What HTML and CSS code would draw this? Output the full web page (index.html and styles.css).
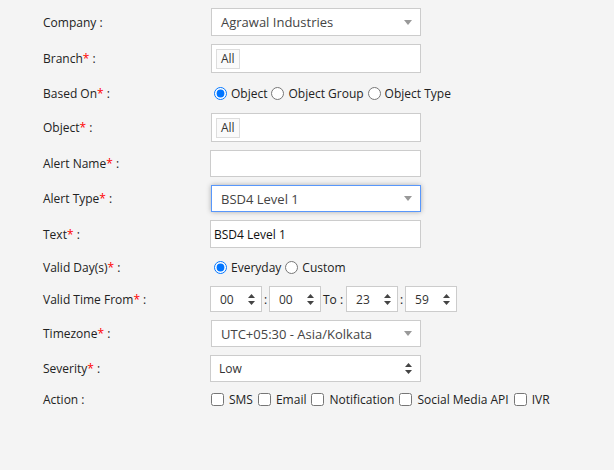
FILE: index.html
```html
<!DOCTYPE html>
<html lang="en">
<head>
  <meta charset="UTF-8">
  <meta name="viewport" content="width=device-width, initial-scale=1.0">
  <title>Alert Settings</title>
  <link rel="stylesheet" href="styles.css">
</head>
<body>
  <div class="form">
    <label class="lbl">Company :</label>
    <div class="chosen first">
      <span>Agrawal Industries</span>
      <svg class="caret" width="8" height="5" viewBox="0 0 8 5"><path d="M0 0h8L4 5z"/></svg>
    </div>

    <label class="lbl">Branch<em>*</em> :</label>
    <div class="tags"><span class="tag">All</span></div>

    <label class="lbl">Based On<em>*</em> :</label>
    <div class="choices">
      <input type="radio" name="based" checked><span>Object</span>
      <input type="radio" name="based"><span>Object Group</span>
      <input type="radio" name="based"><span>Object Type</span>
    </div>

    <label class="lbl">Object<em>*</em> :</label>
    <div class="tags"><span class="tag">All</span></div>

    <label class="lbl">Alert Name<em>*</em> :</label>
    <input class="text" type="text">

    <label class="lbl">Alert Type<em>*</em> :</label>
    <div class="chosen active">
      <span>BSD4 Level 1</span>
      <svg class="caret" width="8" height="5" viewBox="0 0 8 5"><path d="M0 0h8L4 5z"/></svg>
    </div>

    <label class="lbl">Text<em>*</em> :</label>
    <input class="text tall" type="text" value="BSD4 Level 1">

    <label class="lbl">Valid Day(s)<em>*</em> :</label>
    <div class="choices short">
      <input type="radio" name="days" checked><span>Everyday</span>
      <input type="radio" name="days"><span>Custom</span>
    </div>

    <label class="lbl">Valid Time From<em>*</em> :</label>
    <div class="times">
      <div class="spin"><span>00</span><svg class="updown" width="7" height="11" viewBox="0 0 7 11"><path d="M3.5 0L7 4H0zM0 7h7l-3.5 4z"/></svg></div>
      <span class="sep">:</span>
      <div class="spin"><span>00</span><svg class="updown" width="7" height="11" viewBox="0 0 7 11"><path d="M3.5 0L7 4H0zM0 7h7l-3.5 4z"/></svg></div>
      <span class="to">To :</span>
      <div class="spin"><span>23</span><svg class="updown" width="7" height="11" viewBox="0 0 7 11"><path d="M3.5 0L7 4H0zM0 7h7l-3.5 4z"/></svg></div>
      <span class="sep">:</span>
      <div class="spin"><span>59</span><svg class="updown" width="7" height="11" viewBox="0 0 7 11"><path d="M3.5 0L7 4H0zM0 7h7l-3.5 4z"/></svg></div>
    </div>

    <label class="lbl">Timezone<em>*</em> :</label>
    <div class="chosen">
      <span>UTC+05:30 - Asia/Kolkata</span>
      <svg class="caret" width="8" height="5" viewBox="0 0 8 5"><path d="M0 0h8L4 5z"/></svg>
    </div>

    <label class="lbl">Severity<em>*</em> :</label>
    <div class="native">
      <span>Low</span>
      <svg class="updown" width="7" height="11" viewBox="0 0 7 11"><path d="M3.5 0L7 4H0zM0 7h7l-3.5 4z"/></svg>
    </div>

    <label class="lbl">Action :</label>
    <div class="checks">
      <input type="checkbox"><span>SMS</span>
      <input type="checkbox"><span>Email</span>
      <input type="checkbox"><span>Notification</span>
      <input type="checkbox"><span>Social Media API</span>
      <input type="checkbox"><span>IVR</span>
    </div>
  </div>
</body>
</html>
```

FILE: styles.css
```css
* { box-sizing: border-box; }

body {
  margin: 0;
  background: #f4f4f4;
  font-family: "Open Sans", Arial, sans-serif;
  font-size: 12px;
  color: #222;
}

/* Form grid */
.form {
  display: grid;
  grid-template-columns: 167px 1fr;
  row-gap: 8px;
  align-items: center;
  justify-items: start;
  padding: 8px 0 0 43px;
  white-space: nowrap;
}

.lbl em {
  font-style: normal;
  color: #f00;
}

/* Chosen-style select */
.chosen {
  height: 27px;
  margin-left: 1px;
  width: 210px;
  display: flex;
  align-items: center;
  justify-content: space-between;
  padding: 0 8px 0 9px;
  background: #fff;
  border: 1px solid #ccc;
  color: #444;
  font-size: 13px;
}
.chosen.first { height: 28px; }
.chosen.active {
  border-color: #5897fb;
  box-shadow: 0 0 5px rgba(0, 0, 0, 0.3);
}
.caret { fill: #999; }

/* Multi select with tags */
.tags {
  height: 29px;
  margin-left: 1px;
  width: 210px;
  display: flex;
  align-items: center;
  padding-left: 4px;
  background: #fff;
  border: 1px solid #ccc;
}
.tag {
  height: 20px;
  line-height: 18px;
  padding: 0 4px;
  border: 1px solid #ddd;
  background: #fafafa;
  color: #333;
}

/* Inputs */
.text {
  height: 27px;
  width: 211px;
  margin: 0;
  padding: 0 3px;
  border: 1px solid #ccc;
  background: #fff;
  font: inherit;
  color: #111;
}
.text.tall { height: 28px; }

/* Radio / checkbox rows */
.choices, .checks {
  display: flex;
  align-items: center;
  height: 24px;
}
.choices.short { height: 22px; }
.choices input {
  flex-shrink: 0;
  width: 13px;
  height: 13px;
  margin: 0 4px;
}
.checks { height: 18px; }
.checks input {
  flex-shrink: 0;
  width: 13px;
  height: 13px;
  margin: 0 5px;
}
.checks input:first-child { margin-left: 1px; }

/* Time pickers */
.times {
  display: flex;
  align-items: center;
  height: 26px;
}
.spin, .native {
  flex-shrink: 0;
  height: 27px;
  display: flex;
  align-items: center;
  justify-content: space-between;
  background: #fff;
  border: 1px solid #ccc;
  color: #333;
}
.spin {
  width: 52px;
  height: 26px;
  padding: 0 6px 0 9px;
}
.native {
  width: 211px;
  padding: 0 8px 0 8px;
}
.updown { fill: #444; }
.sep {
  width: 7px;
  text-align: center;
}
.to { margin: 0 3px 0 2px; }
```
